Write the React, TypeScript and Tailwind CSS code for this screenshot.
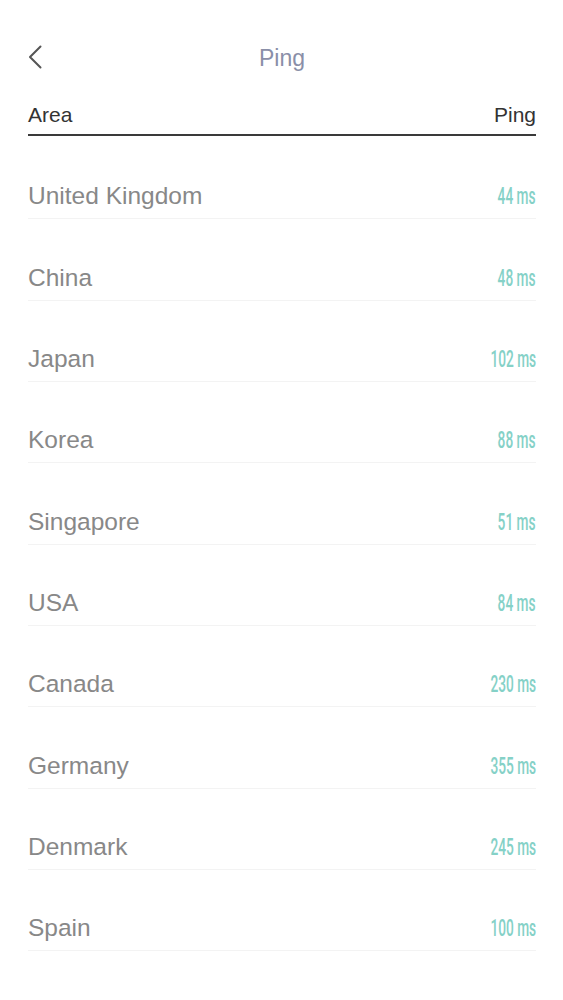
import type { FC } from 'react';

const rows: { area: string; ping: number }[] = [
  { area: 'United Kingdom', ping: 44 },
  { area: 'China', ping: 48 },
  { area: 'Japan', ping: 102 },
  { area: 'Korea', ping: 88 },
  { area: 'Singapore', ping: 51 },
  { area: 'USA', ping: 84 },
  { area: 'Canada', ping: 230 },
  { area: 'Germany', ping: 355 },
  { area: 'Denmark', ping: 245 },
  { area: 'Spain', ping: 100 },
];

const PingValue: FC<{ value: number }> = ({ value }) => (
  <span
    className="inline-block origin-right scale-x-[0.57] whitespace-nowrap text-[24px] leading-6 font-medium text-[#85d1c7]"
    style={{ fontFamily: 'Roboto, sans-serif' }}
  >
    {value} ms
  </span>
);

export default function App() {
  return (
    <div
      className="min-h-[1000px] bg-white pl-7 pr-[27px]"
      style={{ fontFamily: '"Liberation Sans", Arial, sans-serif' }}
    >
      {/* top bar */}
      <div className="relative flex h-[103px] items-start justify-center pt-[43px]">
        <button type="button" className="absolute left-0 top-[45px] text-[#555]">
          <svg width="14" height="24" viewBox="0 0 14 24" fill="none">
            <path d="M12.5 1.5L2 12L12.5 22.5" stroke="currentColor" strokeWidth="2" strokeLinecap="round" strokeLinejoin="round" />
          </svg>
        </button>
        <h1 className="text-[23px] leading-[30px] text-[#8a8fa8]">Ping</h1>
      </div>

      {/* header */}
      <div className="flex items-end justify-between border-b-2 border-[#3a3a3a] pb-[7px] text-[21px] leading-6 text-[#333]">
        <span>Area</span>
        <span>Ping</span>
      </div>

      <div className="mt-[2px]">
        {rows.map((r) => (
          <div
            key={r.area}
            className="flex h-[81.33px] items-end justify-between border-b border-[#f3f3f3] pb-[10px]"
          >
            <span className="text-[24.5px] leading-6 text-[#888]">{r.area}</span>
            <PingValue value={r.ping} />
          </div>
        ))}
      </div>
    </div>
  );
}
